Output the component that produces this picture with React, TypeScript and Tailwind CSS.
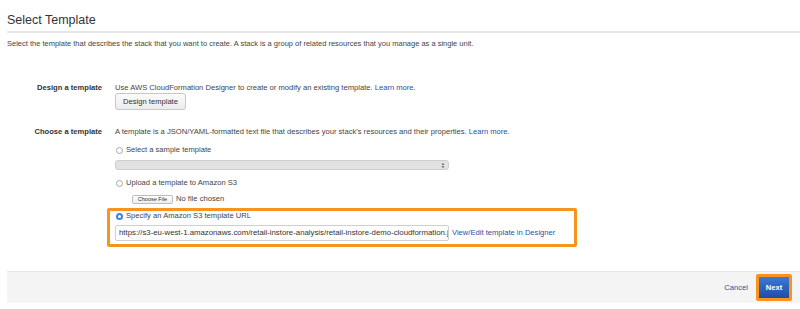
import React from 'react'

function Radio({ checked }: { checked?: boolean }) {
  if (checked) {
    return (
      <span className="flex h-[7px] w-[7px] shrink-0 items-center justify-center rounded-full bg-[#3d86e0]">
        <span className="h-[3px] w-[3px] rounded-full bg-white" />
      </span>
    )
  }
  return <span className="h-[7px] w-[7px] shrink-0 rounded-full border border-[#a9a9a9] bg-white" />
}

export default function App() {
  return (
    <div
      className="h-[309px] w-[800px] overflow-hidden bg-white text-[7.6px] leading-[10px] text-[#444]"
      style={{ fontFamily: '"Liberation Sans", Arial, sans-serif' }}
    >
      <div className="ml-[7px] border-b-2 border-[#e6e6e6] pt-[13px] pb-[4px]">
        <h1 className="text-[12.5px] leading-[14px] text-[#333]">Select Template</h1>
      </div>
      <p className="ml-[7px] mt-[6px] text-[7.5px]">
        Select the template that describes the stack that you want to create. A stack is a group of related
        resources that you manage as a single unit.
      </p>

      {/* Design a template */}
      <div className="mt-[34px] flex">
        <div className="w-[103px] pr-[1px] text-right font-bold text-[#333]">Design a template</div>
        <div className="ml-[12px] flex flex-col items-start">
          <div>
            Use AWS CloudFormation Designer to create or modify an existing template.{' '}
            <span className="text-[#2b51a0]">Learn more.</span>
          </div>
          <button
            type="button"
            className="flex h-[17px] w-[71px] items-center justify-center rounded-[3px] border border-[#c8c8c8] bg-gradient-to-b from-[#fbfbfb] to-[#ececec] text-[7.6px] text-[#333]"
          >
            Design template
          </button>
        </div>
      </div>

      {/* Choose a template */}
      <div className="mt-[17px] flex">
        <div className="w-[103px] pr-[1px] text-right font-bold text-[#333]">Choose a template</div>
        <div className="ml-[12px] flex flex-col items-start">
          <div>
            A template is a JSON/YAML-formatted text file that describes your stack's resources and their
            properties. <span className="text-[#2b51a0]">Learn more.</span>
          </div>

          <div className="mt-[8px] flex items-center gap-[3px] pl-[1px]">
            <Radio />
            <span>Select a sample template</span>
          </div>
          <div className="mt-[5px] flex h-[10px] w-[334px] items-center justify-end rounded-[3px] border border-[#cfcfcf] bg-[#e2e2e2] pr-[3px]">
            <svg width="4" height="7" viewBox="0 0 4 7">
              <path d="M0.5 2.8 L2 1 L3.5 2.8 Z M0.5 4.2 L2 6 L3.5 4.2 Z" fill="#555" />
            </svg>
          </div>

          <div className="mt-[8px] flex items-center gap-[3px] pl-[1px]">
            <Radio />
            <span>Upload a template to Amazon S3</span>
          </div>
          <div className="mt-[6px] flex items-center pl-[17px]">
            <span className="flex h-[9px] w-[41px] items-center justify-center rounded-[2px] border border-[#bdbdbd] bg-gradient-to-b from-white to-[#ededed] text-[5.5px] leading-[8px] text-[#333]">
              Choose File
            </span>
            <span className="ml-[3px]">No file chosen</span>
          </div>

          <div className="ml-[-8px] mt-[4px] w-[470px] rounded-[2px] border-[3px] border-[#f7931e] pb-[3px] pl-[5px]">
            <div className="flex items-center gap-[3px] pl-[1px]">
              <Radio checked />
              <span>Specify an Amazon S3 template URL</span>
            </div>
            <div className="mt-[4px] flex items-center">
              <div className="flex h-[16px] w-[334px] items-center overflow-hidden whitespace-nowrap rounded-[2px] border border-[#cfcfcf] bg-white pl-[3px] text-[7.8px] text-[#333]">
                https://s3-eu-west-1.amazonaws.com/retail-instore-analysis/retail-instore-demo-cloudformation.json
              </div>
              <span className="ml-[3px] text-[#2b51a0]">View/Edit template in Designer</span>
            </div>
          </div>
        </div>
      </div>

      {/* Footer */}
      <div className="ml-[7px] mt-[24px] flex h-[32px] items-center justify-end border-t border-[#e6e6e6] bg-[#f4f4f4] pr-[8px]">
        <span className="text-[#2b51a0]">Cancel</span>
        <div className="ml-[8px] rounded-[2px] border-[3px] border-[#f7931e]">
          <button
            type="button"
            className="flex h-[21px] w-[30px] items-center justify-center bg-gradient-to-b from-[#3f78d4] to-[#1d4ea6] text-[7.6px] font-bold text-white"
          >
            Next
          </button>
        </div>
      </div>
    </div>
  )
}
